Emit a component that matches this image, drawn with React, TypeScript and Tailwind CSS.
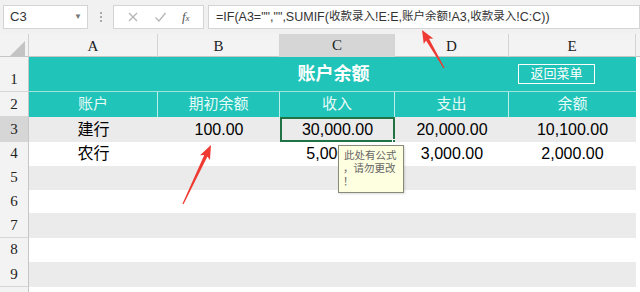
import React from "react";

const cols = ["A", "B", "C", "D", "E"];
const gridCols = "grid grid-cols-[29px_129px_122px_115px_114px_127px_4px]";
const sans = "font-['Liberation_Sans','Noto_Sans_CJK_SC',sans-serif]";
const serif = "font-['Liberation_Serif','Noto_Serif',serif]";

type Point = [number, number];

// tapered arrow shaped like a marker stroke, tail thin, head wide
function arrowPoints(tail: Point, tip: Point, headLen: number, headW: number, shaftW: number) {
  const dx = tip[0] - tail[0];
  const dy = tip[1] - tail[1];
  const len = Math.hypot(dx, dy);
  const ux = dx / len;
  const uy = dy / len;
  const nx = -uy;
  const ny = ux;
  const bx = tip[0] - ux * headLen;
  const by = tip[1] - uy * headLen;
  const pts: Point[] = [
    [tail[0] + nx * 0.6, tail[1] + ny * 0.6],
    [bx + ux * 2 + nx * shaftW / 2, by + uy * 2 + ny * shaftW / 2],
    [bx + nx * headW / 2, by + ny * headW / 2],
    tip,
    [bx - nx * headW / 2, by - ny * headW / 2],
    [bx + ux * 2 - nx * shaftW / 2, by + uy * 2 - ny * shaftW / 2],
    [tail[0] - nx * 0.6, tail[1] - ny * 0.6],
  ];
  return pts.map((p) => p.join(",")).join(" ");
}

const rows = [
  { n: 3, h: "h-[25px]", band: true, cells: ["建行", "100.00", "30,000.00", "20,000.00", "10,100.00"] },
  { n: 4, h: "h-[24px]", band: false, cells: ["农行", "", "5,000.00", "3,000.00", "2,000.00"] },
  { n: 5, h: "h-[24px]", band: true, cells: [] },
  { n: 6, h: "h-[23px]", band: false, cells: [] },
  { n: 7, h: "h-[25px]", band: true, cells: [] },
  { n: 8, h: "h-[24px]", band: false, cells: [] },
  { n: 9, h: "h-[25px]", band: true, cells: [] },
  { n: 0, h: "h-[24px]", band: false, cells: [] },
];

function Zh({ children }: { children: React.ReactNode }) {
  return <span className="text-[11.5px]">{children}</span>;
}

function FormulaBar() {
  return (
    <div className={`h-[34px] bg-[#f1f1f1] flex items-center pl-[3px] ${sans}`}>
      <div className="w-[85px] h-[24px] bg-white border border-[#d4d4d4] flex items-center justify-between pl-[6px] pr-[5px]">
        <span className="text-[13px] text-[#333]">C3</span>
        <span className="text-[8px] text-[#777]">▼</span>
      </div>
      <div className="w-[25px] flex flex-col items-center gap-[2px]">
        <span className="w-[2px] h-[2px] bg-[#aaa]" />
        <span className="w-[2px] h-[2px] bg-[#aaa]" />
        <span className="w-[2px] h-[2px] bg-[#aaa]" />
      </div>
      <div className="w-[91px] h-[24px] bg-white border border-[#d4d4d4] flex items-center justify-around px-[6px]">
        <svg width="12" height="12" viewBox="0 0 12 12">
          <path d="M2 2 L10 10 M10 2 L2 10" stroke="#b5b5b5" strokeWidth="1.3" />
        </svg>
        <svg width="13" height="12" viewBox="0 0 13 12">
          <path d="M1.5 6.5 L5 10 L11.5 2" stroke="#b5b5b5" strokeWidth="1.3" fill="none" />
        </svg>
        <span className={`${serif} italic text-[13px] text-[#555]`}>
          f<span className="text-[9px]">x</span>
        </span>
      </div>
      <div className="ml-[4px] flex-1 h-[24px] bg-white border border-[#d4d4d4] flex items-center pl-[7px] text-[12.5px] text-[#333] whitespace-nowrap">
        =IF(A3="","",SUMIF(<Zh>收款录入</Zh>!E:E,<Zh>账户余额</Zh>!A3,<Zh>收款录入</Zh>!C:C))
      </div>
    </div>
  );
}

function ColumnHeader() {
  return (
    <div className={`${gridCols} h-[23px] bg-[#f3f3f3] border-b border-[#c6c6c6] ${serif}`}>
      <div className="relative border-r border-[#d0d0d0]">
        <svg className="absolute right-[3px] bottom-[3px]" width="15" height="15" viewBox="0 0 15 15">
          <polygon points="15,0 15,15 0,15" fill="#c4c4c4" />
        </svg>
      </div>
      {cols.map((c) => (
        <div
          key={c}
          className={`flex items-center justify-center text-[15px] text-[#222] border-r border-[#d4d4d4] ${
            c === "C" ? "bg-[#d6d6d6] border-b-2 border-b-[#217346]" : ""
          }`}
        >
          {c}
        </div>
      ))}
      <div />
    </div>
  );
}

function RowNum({ n, active }: { n: number; active?: boolean }) {
  return (
    <div
      className={`flex items-end justify-center pb-[1px] text-[15px] text-[#222] border-r border-[#c6c6c6] border-b border-b-[#d6d6d6] ${serif} ${
        active ? "bg-[#d6d6d6]" : "bg-[#f3f3f3]"
      }`}
    >
      {n > 0 ? n : ""}
    </div>
  );
}

export default function App() {
  return (
    <div className={`relative w-[640px] h-[292px] overflow-hidden bg-white ${sans}`}>
      <FormulaBar />
      <ColumnHeader />

      {/* row 1: title */}
      <div className={`${gridCols} h-[35px]`}>
        <RowNum n={1} />
        <div className="col-span-5 bg-[#20c4b8] border-b border-[#9fe3dd] grid grid-cols-[129px_122px_115px_114px_127px] items-center">
          <div />
          <div className="col-span-3 text-center text-white font-bold text-[18px]">账户余额</div>
          <div className="flex">
            <div className="ml-[9px] w-[77px] h-[20px] border border-white flex items-center justify-center text-white text-[13px]">
              返回菜单
            </div>
          </div>
        </div>
        <div />
      </div>

      {/* row 2: headings */}
      <div className={`${gridCols} h-[25px]`}>
        <RowNum n={2} />
        {["账户", "期初余额", "收入", "支出", "余额"].map((t, i) => (
          <div
            key={t}
            className={`bg-[#20c4b8] flex items-center justify-center text-[15px] text-[#e6fbf8] ${
              i < 4 ? "border-r border-[#bdeeea]" : ""
            }`}
          >
            {t}
          </div>
        ))}
        <div />
      </div>

      {rows.map((r) => (
        <div key={r.n} className={`${gridCols} ${r.h}`}>
          <RowNum n={r.n} active={r.n === 3} />
          {cols.map((c, i) => (
            <div
              key={c}
              className={`relative flex items-center justify-center text-[16px] text-black ${
                r.band ? "bg-[#ebebeb]" : "bg-white"
              }`}
            >
              {r.cells[i] ?? ""}
              {r.n === 3 && c === "C" && (
                <>
                  <div className="absolute inset-0 border-2 border-[#217346]" />
                  <div className="absolute right-[-3px] bottom-[-3px] w-[6px] h-[6px] bg-[#217346] border border-white" />
                </>
              )}
            </div>
          ))}
          <div className="bg-white" />
        </div>
      ))}

      {/* comment tooltip on C4 */}
      <div className="absolute left-[338px] top-[145px] w-[66px] h-[48px] bg-[#fefee0] border border-[#8a8a7a] shadow-[1px_1px_2px_rgba(0,0,0,0.15)] px-[4px] pt-[3px] text-[10.5px] leading-[13px] text-[#666] whitespace-nowrap">
        <div className="pl-[1px]">此处有公式</div>
        <div>，请勿更改</div>
        <div>！</div>
      </div>

      {/* red annotation arrows */}
      <svg className="absolute left-0 top-0 pointer-events-none" width="640" height="292">
        <polygon points={arrowPoints([444, 68], [422, 30], 13, 11, 3.5)} fill="#ee3a32" />
        <polygon points={arrowPoints([183, 204], [211, 145], 14, 11, 3.5)} fill="#ee3a32" />
      </svg>
    </div>
  );
}
